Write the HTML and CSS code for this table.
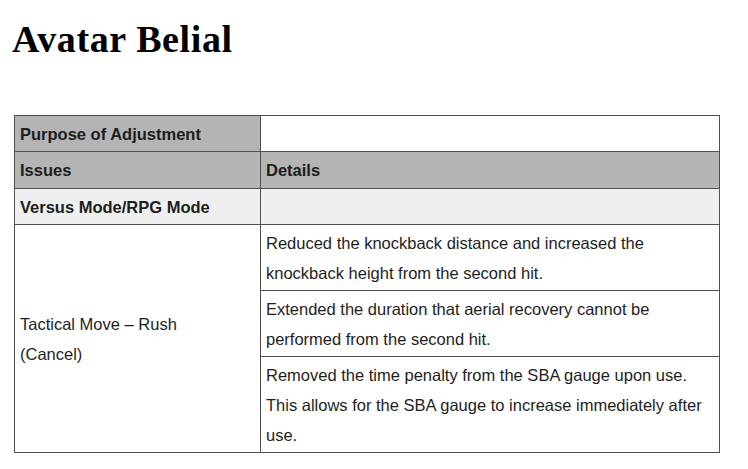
FILE: index.html
```html
<!DOCTYPE html>
<html>
<head>
<meta charset="utf-8">
<link rel="stylesheet" href="styles.css">
</head>
<body>
<h1 class="title">Avatar Belial</h1>
<table class="adj">
  <colgroup><col class="c1"><col class="c2"></colgroup>
  <tr class="purpose"><th class="dark">Purpose of Adjustment</th><td></td></tr>
  <tr class="dark"><th>Issues</th><th>Details</th></tr>
  <tr class="light"><th>Versus Mode/RPG Mode</th><td></td></tr>
  <tr><td rowspan="3" class="issue">Tactical Move – Rush<br>(Cancel)</td><td>Reduced the knockback distance and increased the<br>knockback height from the second hit.</td></tr>
  <tr><td>Extended the duration that aerial recovery cannot be<br>performed from the second hit.</td></tr>
  <tr><td>Removed the time penalty from the SBA gauge upon use.<br>This allows for the SBA gauge to increase immediately after<br>use.</td></tr>
</table>
</body>
</html>
```
FILE: styles.css
```css
html, body { margin: 0; padding: 0; background: #fff; }
body { padding: 15px 0 0 12px; }
.title {
  font-family: "Liberation Serif", "DejaVu Serif", serif;
  font-weight: bold;
  font-size: 38px;
  line-height: 48px;
  margin: 0 0 52px 0;
  color: #000;
  letter-spacing: 0.6px;
}
.adj {
  margin-left: 2px;
  border-collapse: collapse;
  width: 706px;
  font-family: "Liberation Sans", Arial, sans-serif;
  font-size: 16.5px;
  line-height: 30px;
  color: #1e1e1e;
}
.c1 { width: 246px; }
.adj th, .adj td {
  border: 1px solid #505050;
  padding: 3px 4px 2px 5px;
  text-align: left;
  vertical-align: top;
  white-space: nowrap;
}
.adj th { font-weight: bold; }
.dark, .dark th { background: #b4b4b4; }
tr.dark th { padding-bottom: 3px; }
.light th, .light td { background: #efefef; }
.adj td.issue { vertical-align: middle; }
```
